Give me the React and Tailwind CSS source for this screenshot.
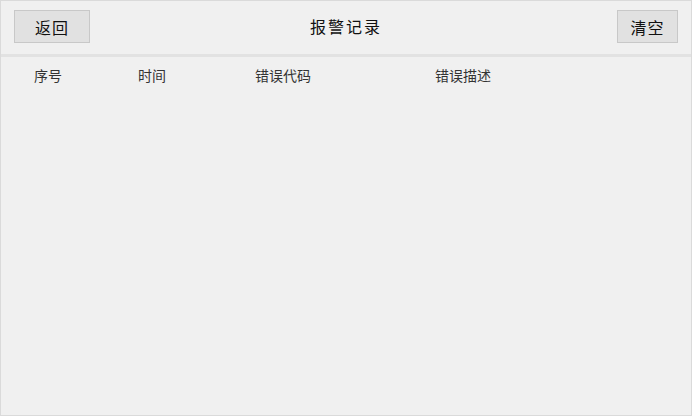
import React from "react";

const columns = [
  { label: "序号", width: "w-[104px]" },
  { label: "时间", width: "w-[117px]" },
  { label: "错误代码", width: "w-[180px]" },
  { label: "错误描述", width: "flex-1" },
];

const App = () => {
  const records = [];

  return (
    <div
      className="w-[692px] h-[416px] bg-[#f0f0f0] border border-[#dadada] flex flex-col overflow-hidden"
      style={{ fontFamily: '"Noto Sans CJK SC", sans-serif' }}
    >
      {/* Header bar */}
      <div className="h-[53px] grid grid-cols-[1fr_auto_1fr] items-start px-[13px] pt-[9px]">
        <div>
          <button className="w-[76px] h-[33px] bg-[#e1e1e1] border border-[#c8c8c8] text-[16px] text-[#111] tracking-[1px] leading-none">
            返回
          </button>
        </div>
        <h1 className="mt-[8px] text-[16px] text-[#111] tracking-[2px] leading-none">
          报警记录
        </h1>
        <div className="flex justify-end">
          <button className="w-[61px] h-[33px] bg-[#e1e1e1] border border-[#c8c8c8] text-[16px] text-[#111] tracking-[1px] leading-none">
            清空
          </button>
        </div>
      </div>

      <div className="h-[3px] bg-[#e2e2e2]" />

      {/* Table header */}
      <div className="flex pl-[33px] pt-[11px] text-[14px] text-[#333] leading-none">
        {columns.map((c) => (
          <div key={c.label} className={c.width}>
            {c.label}
          </div>
        ))}
      </div>

      <div className="flex-1">
        {records.map((r, i) => (
          <div key={i} className="flex pl-[33px] text-[14px]">
            <div className="w-[104px]">{i + 1}</div>
            <div className="w-[117px]">{r.time}</div>
            <div className="w-[180px]">{r.code}</div>
            <div className="flex-1">{r.desc}</div>
          </div>
        ))}
      </div>
    </div>
  );
};

export default App;
